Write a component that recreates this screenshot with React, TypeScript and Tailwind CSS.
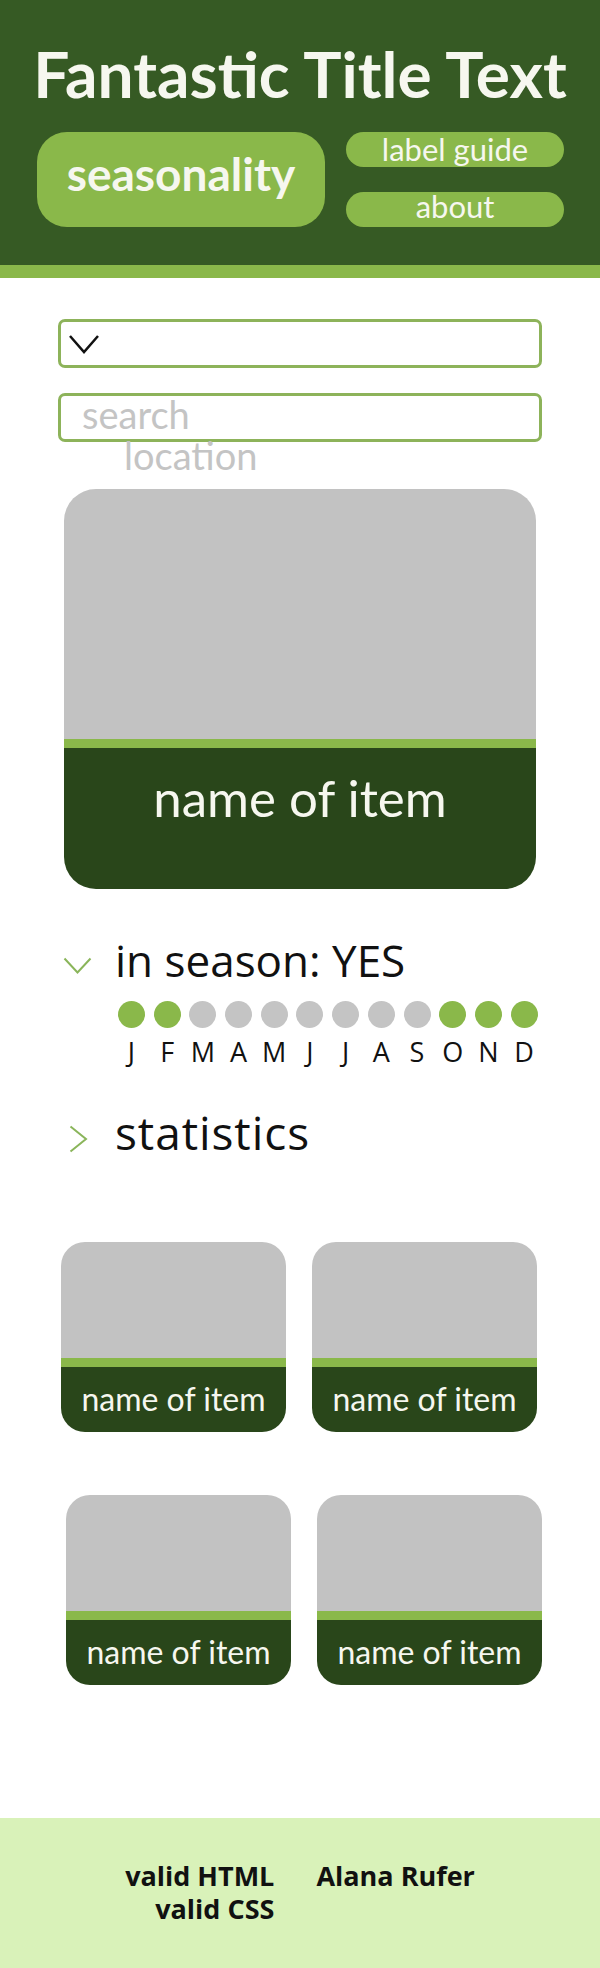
import React from "react";

const MONTHS = [
  { label: "J", on: true },
  { label: "F", on: true },
  { label: "M", on: false },
  { label: "A", on: false },
  { label: "M", on: false },
  { label: "J", on: false },
  { label: "J", on: false },
  { label: "A", on: false },
  { label: "S", on: false },
  { label: "O", on: true },
  { label: "N", on: true },
  { label: "D", on: true },
];

const lato = "font-['Lato','Liberation_Sans',sans-serif]";
const body = "font-['Open_Sans','Liberation_Sans',sans-serif]";

function SmallCard() {
  return (
    <div className="flex h-[190px] w-[225px] flex-col overflow-hidden rounded-[24px]">
      <div className="h-[116px] bg-[#c2c2c2]" />
      <div className="h-[9px] bg-[#8ab84a]" />
      <div
        className={`flex-1 bg-[#29461a] pt-[16px] text-center text-[32px] leading-none text-[#f6f7ef] ${lato}`}
      >
        name of item
      </div>
    </div>
  );
}

export default function App() {
  return (
    <div className="flex min-h-[1968px] w-[600px] flex-col bg-white">
      <header className="bg-[#365a24]">
        <h1
          className={`pt-[42px] text-center text-[64px] font-bold leading-none text-[#f6f7ef] ${lato}`}
        >
          Fantastic Title Text
        </h1>
        <nav className="mt-[26px] flex gap-[21px] pb-[38px] pl-[37px] pr-[36px]">
          <a
            className={`flex h-[95px] w-[288px] items-center justify-center rounded-[30px] bg-[#8ab84a] pb-[11px] text-[46px] font-bold leading-none text-[#f6f7ef] ${lato}`}
          >
            seasonality
          </a>
          <div className="flex flex-1 flex-col gap-[25px]">
            <a
              className={`flex h-[35px] items-center justify-center rounded-full bg-[#8ab84a] text-[31px] leading-none text-[#f6f7ef] ${lato}`}
            >
              label guide
            </a>
            <a
              className={`flex h-[35px] items-center justify-center rounded-full bg-[#8ab84a] pb-[6px] text-[31px] leading-none text-[#f6f7ef] ${lato}`}
            >
              about
            </a>
          </div>
        </nav>
      </header>
      <div className="h-[13px] bg-[#8ab84a]" />

      <main className="flex flex-col">
        <div className="mx-[58px] mt-[41px] flex h-[49px] items-center rounded-[7px] border-[3px] border-[#8db35a] pl-[7px]">
          <svg width="32" height="20" viewBox="0 0 32 20" fill="none">
            <polyline
              points="2,2 16,18 30,2"
              stroke="#111"
              strokeWidth="2.5"
              strokeLinejoin="miter"
            />
          </svg>
        </div>

        <div className="mx-[58px] mt-[25px] h-[49px] rounded-[7px] border-[3px] border-[#8db35a]">
          <div
            className={`-mt-[2px] pl-[21px] text-[38px] leading-[41px] text-[#c4c4c4] ${lato}`}
          >
            <div>search</div>
            <div className="pl-[42px]">location</div>
          </div>
        </div>

        <div className="mx-[64px] mt-[47px] flex h-[400px] flex-col overflow-hidden rounded-[32px]">
          <div className="h-[250px] bg-[#c2c2c2]" />
          <div className="h-[9px] bg-[#8ab84a]" />
          <div
            className={`flex-1 bg-[#29461a] pt-[24px] text-center text-[51px] leading-none text-[#f6f7ef] ${lato}`}
          >
            name of item
          </div>
        </div>

        <section className={`mt-[47px] pl-[63px] text-[#111] ${body}`}>
          <div className="flex items-start">
            <svg width="29" height="17" viewBox="0 0 29 17" fill="none" className="mt-[21px]">
              <polyline points="1.5,1.5 14.5,15.5 27.5,1.5" stroke="#8ab55a" strokeWidth="2" />
            </svg>
            <h2 className="ml-[23px] text-[44px] leading-[48px]">in season: YES</h2>
          </div>

          <div className="ml-[55px] mt-[17px] grid w-max grid-cols-[repeat(12,27px)] gap-x-[8.7px]">
            {MONTHS.map((m, i) => (
              <span
                key={"d" + i}
                className={`h-[27px] w-[27px] rounded-full ${m.on ? "bg-[#8ab84a]" : "bg-[#c4c4c4]"}`}
              />
            ))}
            {MONTHS.map((m, i) => (
              <span key={"l" + i} className="mt-[9px] text-center text-[27px] leading-[30px]">
                {m.label}
              </span>
            ))}
          </div>

          <div className="mt-[41px] flex items-start">
            <svg width="19" height="28" viewBox="0 0 19 28" fill="none" className="ml-[6px] mt-[17px]">
              <polyline points="1.5,1.5 17,14 1.5,26.5" stroke="#8ab55a" strokeWidth="2" />
            </svg>
            <h2 className="ml-[27px] text-[46px] leading-[48px] tracking-[0.02em]">statistics</h2>
          </div>
        </section>

        <div className="mt-[86px] flex flex-col gap-[63px]">
          <div className="flex gap-[26px] pl-[61px]">
            <SmallCard />
            <SmallCard />
          </div>
          <div className="flex gap-[26px] pl-[66px]">
            <SmallCard />
            <SmallCard />
          </div>
        </div>
      </main>

      <footer
        className={`mt-auto flex h-[150px] justify-center gap-[42px] bg-[#d9f2b9] pt-[41px] text-[27px] font-bold leading-[33px] text-[#111] ${body}`}
      >
        <div className="flex flex-col items-end">
          <span>valid HTML</span>
          <span>valid CSS</span>
        </div>
        <span>Alana Rufer</span>
      </footer>
    </div>
  );
}
